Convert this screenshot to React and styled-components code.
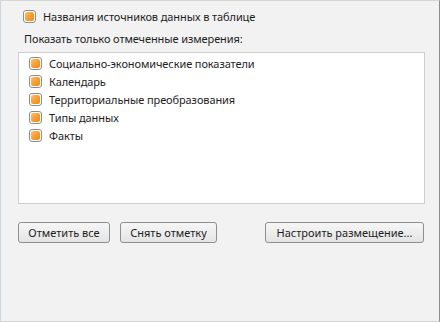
import React, { useState } from "react";
import styled, { createGlobalStyle } from "styled-components";

const GlobalStyle = createGlobalStyle`
  body {
    margin: 0;
    background: #f2f2f2;
    font-family: "Noto Sans", "Open Sans", sans-serif;
  }
`;

const Frame = styled.div`
  box-sizing: border-box;
  width: 440px;
  height: 322px;
  background: #f2f2f2;
  border-top: 1px solid #d6d6d6;
  border-left: 1px solid #ccd4de;
  border-right: 1px solid #8c8c8c;
  border-bottom: 1px solid #d2d2d2;
  padding: 8px 15px 0 17px;
  font-size: 11px;
  letter-spacing: -0.1px;
  color: #1e1e1e;
`;

const CheckRow = styled.label`
  display: flex;
  align-items: center;
  gap: 7px;
  height: ${(p) => p.$h || 18}px;
  padding-left: ${(p) => p.$indent || 0}px;
  cursor: default;
  white-space: nowrap;
`;

const Box = styled.span`
  box-sizing: border-box;
  width: 13px;
  height: 13px;
  flex: none;
  border: 1px solid #8e8e8e;
  border-radius: 3px;
  background: #fff;
  padding: 1px;
  display: flex;
`;

const Fill = styled.span`
  flex: 1;
  border-radius: 2px;
  background: ${(p) =>
    p.$on
      ? "linear-gradient(135deg, #ffc36e 0%, #f9a13a 45%, #ef8a12 100%)"
      : "#fff"};
`;

const Caption = styled.div`
  padding: 8px 0 0 6px;
  height: 15px;
  line-height: 15px;
`;

const ListBox = styled.div`
  box-sizing: border-box;
  margin-top: 6px;
  width: 407px;
  height: 152px;
  background: #fff;
  border: 1px solid #cfcfcf;
  padding: 1px 0 0 10px;
`;

const Buttons = styled.div`
  display: flex;
  gap: 10px;
  margin-top: 18px;
  width: 407px;
`;

const Button = styled.button`
  box-sizing: border-box;
  height: 21px;
  width: ${(p) => p.$w}px;
  margin-left: ${(p) => p.$ml || 0}px;
  padding: 0;
  font: inherit;
  color: #1e1e1e;
  border: 1px solid #8f8f8f;
  border-radius: 3px;
  background: linear-gradient(#f6f6f6, #e4e4e4);
`;

const Checkbox = ({ checked, onToggle, children, ...rest }) => (
  <CheckRow {...rest} onClick={onToggle}>
    <Box>
      <Fill $on={checked} />
    </Box>
    <span>{children}</span>
  </CheckRow>
);

const dims = [
  "Социально-экономические показатели",
  "Календарь",
  "Территориальные преобразования",
  "Типы данных",
  "Факты",
];

export default function App() {
  const [names, setNames] = useState(true);
  const [checked, setChecked] = useState(dims.map(() => true));

  const toggle = (i) =>
    setChecked(checked.map((c, j) => (j === i ? !c : c)));

  return (
    <Frame>
      <GlobalStyle />
      <Checkbox $h={14} $indent={5} checked={names} onToggle={() => setNames(!names)}>
        Названия источников данных в таблице
      </Checkbox>
      <Caption>Показать только отмеченные измерения:</Caption>
      <ListBox>
        {dims.map((d, i) => (
          <Checkbox key={d} checked={checked[i]} onToggle={() => toggle(i)}>
            {d}
          </Checkbox>
        ))}
      </ListBox>
      <Buttons>
        <Button $w={92} onClick={() => setChecked(dims.map(() => true))}>
          Отметить все
        </Button>
        <Button $w={97} onClick={() => setChecked(dims.map(() => false))}>
          Снять отметку
        </Button>
        <Button $w={159} $ml={38}>
          Настроить размещение...
        </Button>
      </Buttons>
    </Frame>
  );
}
